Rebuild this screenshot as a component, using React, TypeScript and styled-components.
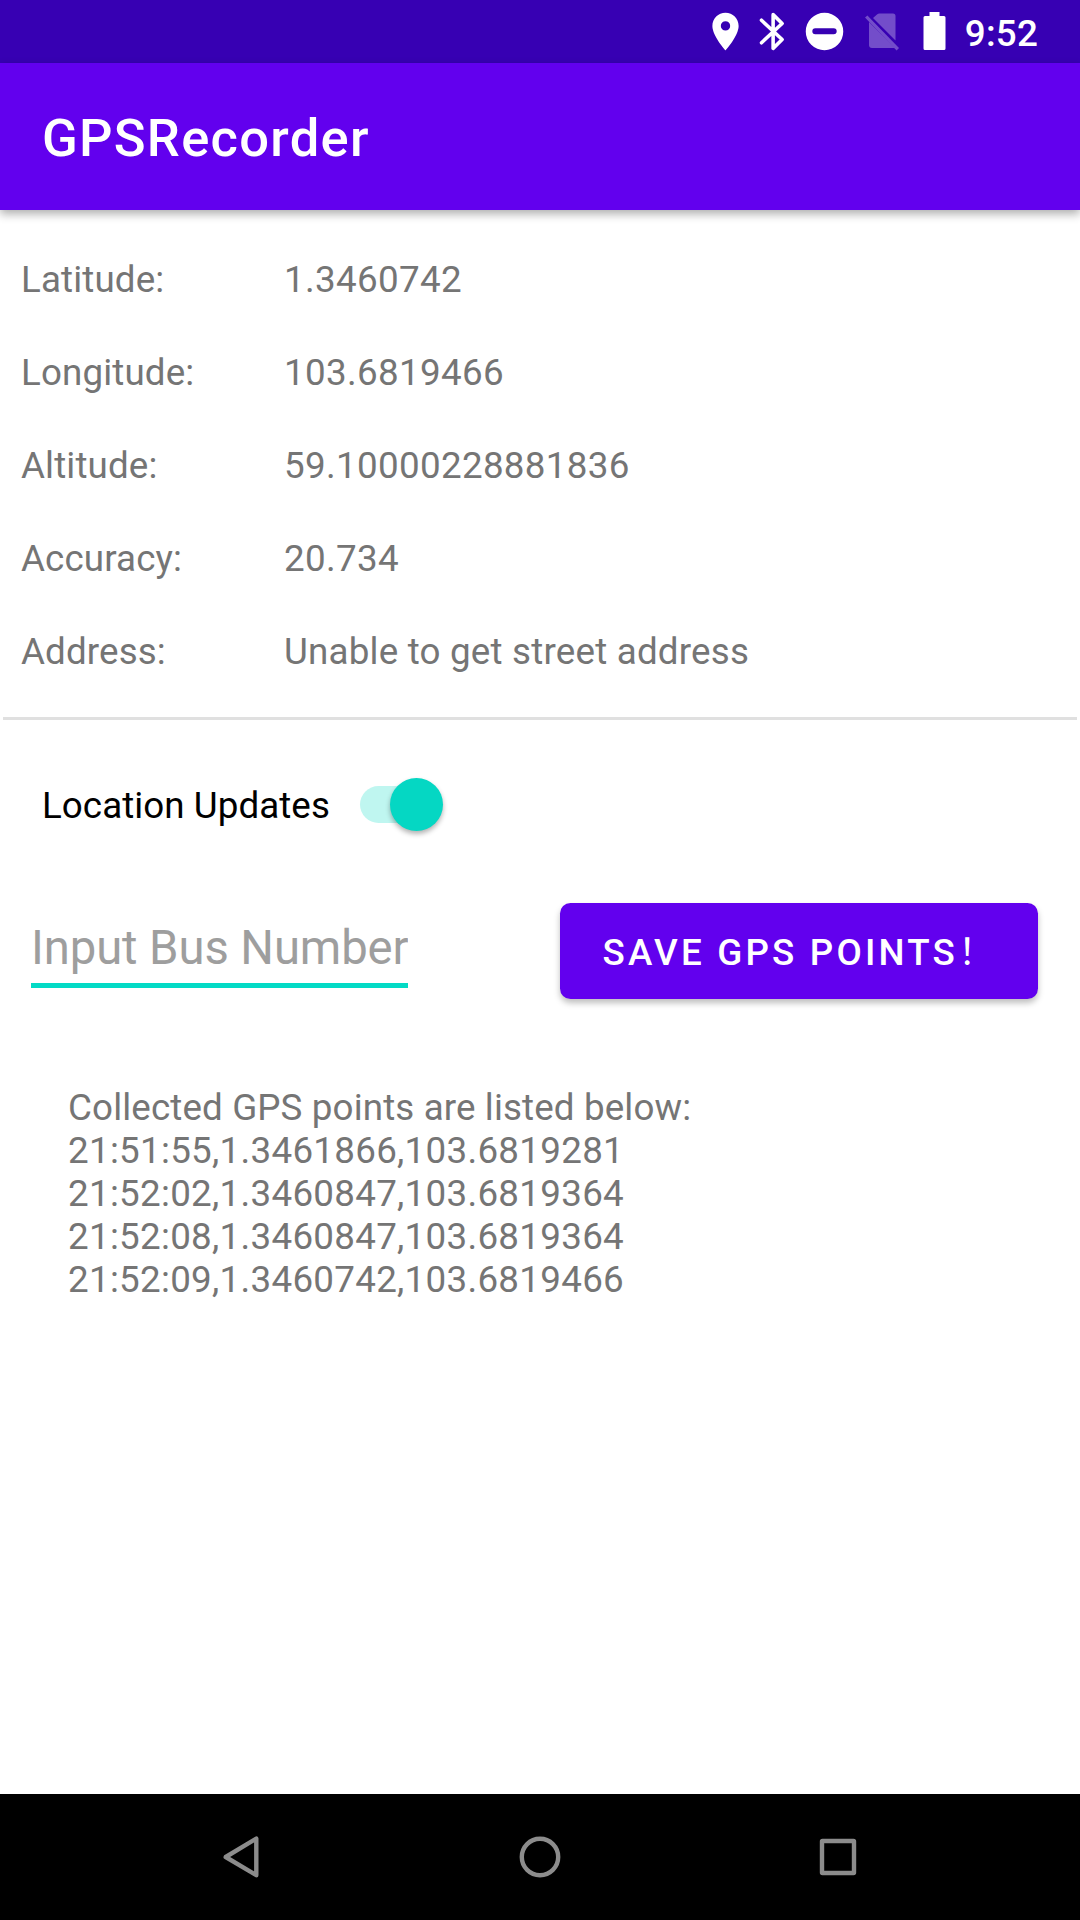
import React from "react";
import styled, { createGlobalStyle } from "styled-components";

const GlobalStyle = createGlobalStyle`
  body {
    margin: 0;
    background: #ffffff;
    font-family: Roboto, "Noto Sans CJK SC", sans-serif;
  }
`;

const Screen = styled.div`
  display: flex;
  flex-direction: column;
  width: 1080px;
  height: 1920px;
  overflow: hidden;
  background: #ffffff;
`;

const StatusBar = styled.header`
  display: flex;
  align-items: center;
  justify-content: flex-end;
  box-sizing: border-box;
  height: 63px;
  padding-right: 42px;
  background: #3700b3;
  color: #ffffff;
`;

const StatusIcon = styled.svg<{ $gap: number }>`
  flex: none;
  width: 45px;
  height: 45px;
  margin-right: ${(p) => p.$gap}px;
`;

const Clock = styled.time`
  font-size: 36.75px;
  font-weight: 500;
  line-height: 43px;
  letter-spacing: 0.2px;
  padding-top: 4px;
`;

const AppBar = styled.div`
  display: flex;
  align-items: center;
  flex: none;
  height: 147px;
  padding-left: 42px;
  background: #6200ee;
  box-shadow: 0 4px 9px rgba(0, 0, 0, 0.32);
  z-index: 1;
`;

const Title = styled.h1`
  margin: 0;
  padding-top: 3px;
  font-size: 52.5px;
  font-weight: 500;
  line-height: 62px;
  letter-spacing: 1.27px;
  color: #ffffff;
`;

const Content = styled.main`
  display: flex;
  flex-direction: column;
  flex: 1;
`;

const Readings = styled.dl`
  display: grid;
  grid-template-columns: 263px 1fr;
  grid-auto-rows: 93px;
  align-items: center;
  margin: 0;
  padding: 23px 0 19px 21px;
  font-size: 36.75px;
  line-height: 43px;
  color: #757575;
`;

const Label = styled.dt`
  margin: 0;
  letter-spacing: 0.13px;
`;

const Value = styled.dd<{ $numeric: boolean }>`
  margin: 0;
  letter-spacing: ${(p) => (p.$numeric ? 0.33 : 0.2)}px;
`;

const Divider = styled.hr`
  width: 1074px;
  height: 3px;
  margin: 0 auto;
  border: 0;
  background: #e0e0e0;
`;

const SwitchRow = styled.label`
  display: flex;
  align-items: center;
  height: 53px;
  margin-top: 58px;
  padding-left: 42px;
  font-size: 36.75px;
  line-height: 43px;
  letter-spacing: 0.06px;
  color: #000000;
`;

const SwitchText = styled.span`
  width: 318px;
  padding-top: 2px;
`;

const Track = styled.span`
  display: flex;
  align-items: center;
  justify-content: flex-end;
  width: 74px;
  height: 37px;
  border-radius: 19px;
  background: #bff6f0;
`;

const Thumb = styled.span`
  flex: none;
  width: 53px;
  height: 53px;
  margin-right: -9px;
  border-radius: 50%;
  background: #05d7c3;
  box-shadow: 0 3px 5px rgba(0, 0, 0, 0.3);
`;

const FormRow = styled.form`
  display: flex;
  justify-content: space-between;
  height: 96px;
  margin-top: 72px;
  padding: 0 42px 0 31px;
`;

const BusInput = styled.input`
  box-sizing: border-box;
  width: 377px;
  height: 85px;
  padding: 17px 0 7px;
  border: 0;
  border-bottom: 5px solid #03dac5;
  background: none;
  outline: none;
  font-family: inherit;
  font-size: 47.25px;
  line-height: 55px;
  letter-spacing: -0.1px;
  color: #000000;

  &::placeholder {
    color: #9e9e9e;
    opacity: 1;
  }
`;

const SaveButton = styled.button`
  display: flex;
  align-items: center;
  width: 478px;
  height: 96px;
  padding: 2px 0 0 42.5px;
  border: 0;
  border-radius: 10.5px;
  background: #6200ee;
  box-shadow: 0 4px 6px rgba(0, 0, 0, 0.26);
  font-family: inherit;
  font-size: 36.75px;
  font-weight: 500;
  letter-spacing: 3.19px;
  line-height: 43px;
  white-space: nowrap;
  color: #ffffff;
`;

const WideMark = styled.span`
  font-family: "Noto Sans CJK SC", sans-serif;
  font-weight: 400;
  line-height: 0;
`;

const PointLog = styled.section`
  margin-top: 87px;
  padding-left: 68px;
  font-size: 36.75px;
  line-height: 43px;
  color: #757575;
`;

const LogLine = styled.div<{ $numeric?: boolean }>`
  height: 43px;
  letter-spacing: ${(p) => (p.$numeric ? 0.29 : 0.13)}px;
  white-space: nowrap;
`;

const NavBar = styled.nav`
  display: flex;
  align-items: center;
  justify-content: center;
  gap: 238px;
  flex: none;
  height: 126px;
  background: #000000;
`;

const NavIcon = styled.svg`
  width: 60px;
  height: 60px;
  fill: none;
  stroke: #8c8c8c;
  stroke-width: 4.4;
  stroke-linejoin: round;
`;

const readings = [
  ["Latitude:", "1.3460742"],
  ["Longitude:", "103.6819466"],
  ["Altitude:", "59.10000228881836"],
  ["Accuracy:", "20.734"],
  ["Address:", "Unable to get street address"],
];

const points = [
  "21:51:55,1.3461866,103.6819281",
  "21:52:02,1.3460847,103.6819364",
  "21:52:08,1.3460847,103.6819364",
  "21:52:09,1.3460742,103.6819466",
];

export default function App() {
  return (
    <Screen>
      <GlobalStyle />
      <StatusBar>
        <StatusIcon viewBox="0 0 24 24" $gap={3}>
          <path
            fill="#fff"
            d="M12 2C8.13 2 5 5.13 5 9c0 5.25 7 13 7 13s7-7.75 7-13c0-3.87-3.13-7-7-7zm0 9.5a2.5 2.5 0 1 1 0-5 2.5 2.5 0 0 1 0 5z"
          />
        </StatusIcon>
        <StatusIcon viewBox="0 0 24 24" $gap={6}>
          <path
            fill="none"
            stroke="#fff"
            strokeWidth="1.9"
            strokeLinecap="round"
            strokeLinejoin="round"
            d="M5.600 6L16.600 16.300L11.800 21V3L16.600 7.700L5.600 18"
          />
        </StatusIcon>
        <StatusIcon viewBox="0 0 24 24" $gap={12}>
          <path
            fill="#fff"
            fillRule="evenodd"
            d="M12 2a10 10 0 1 0 0 20 10 10 0 0 0 0-20zM7.1 10.3h9.8a1.6 1.6 0 0 1 0 3.2H7.1a1.6 1.6 0 0 1 0-3.2z"
          />
        </StatusIcon>
        <StatusIcon viewBox="0 0 45 45" $gap={8}>
          <g fill="#fff" opacity="0.3">
            <path d="M14 9L18 5.5Q19 4.5 20.500 4.500H34Q36.500 4.500 36.500 7V31.500Z" />
            <path d="M10 13L35.500 38.700Q34.800 39 34 39H13Q10 39 10 36Z" />
            <path d="M6 8.500L8.400 6.500L40 39L37.600 41.500Z" />
          </g>
        </StatusIcon>
        <StatusIcon viewBox="0 0 45 45" $gap={8}>
          <path
            fill="#fff"
            d="M17.500 3h10v4h4.500q1.500 0 1.500 1.500v31q0 1.500-1.500 1.500h-19q-1.500 0-1.500-1.500v-31q0-1.500 1.500-1.500h4.500z"
          />
        </StatusIcon>
        <Clock>9:52</Clock>
      </StatusBar>

      <AppBar>
        <Title>GPSRecorder</Title>
      </AppBar>

      <Content>
        <Readings>
          {readings.map(([label, value]) => (
            <React.Fragment key={label}>
              <Label>{label}</Label>
              <Value $numeric={/^\d/.test(value)}>{value}</Value>
            </React.Fragment>
          ))}
        </Readings>
        <Divider />

        <SwitchRow>
          <SwitchText>Location Updates</SwitchText>
          <Track>
            <Thumb />
          </Track>
        </SwitchRow>

        <FormRow>
          <BusInput placeholder="Input Bus Number" />
          <SaveButton type="button">
            <span>
              SAVE GPS POINTS<WideMark lang="zh-CN">{"\uFF01"}</WideMark>
            </span>
          </SaveButton>
        </FormRow>

        <PointLog>
          <LogLine>Collected GPS points are listed below:</LogLine>
          {points.map((point) => (
            <LogLine key={point} $numeric>
              {point}
            </LogLine>
          ))}
        </PointLog>
      </Content>

      <NavBar>
        <NavIcon viewBox="0 0 60 60">
          <path d="M44.300 11.600V48.200L13.700 30Z" />
        </NavIcon>
        <NavIcon viewBox="0 0 60 60">
          <circle cx="30" cy="30" r="18.200" />
        </NavIcon>
        <NavIcon viewBox="0 0 60 60">
          <rect x="14" y="14" width="32" height="32" rx="0.500" />
        </NavIcon>
      </NavBar>
    </Screen>
  );
}
